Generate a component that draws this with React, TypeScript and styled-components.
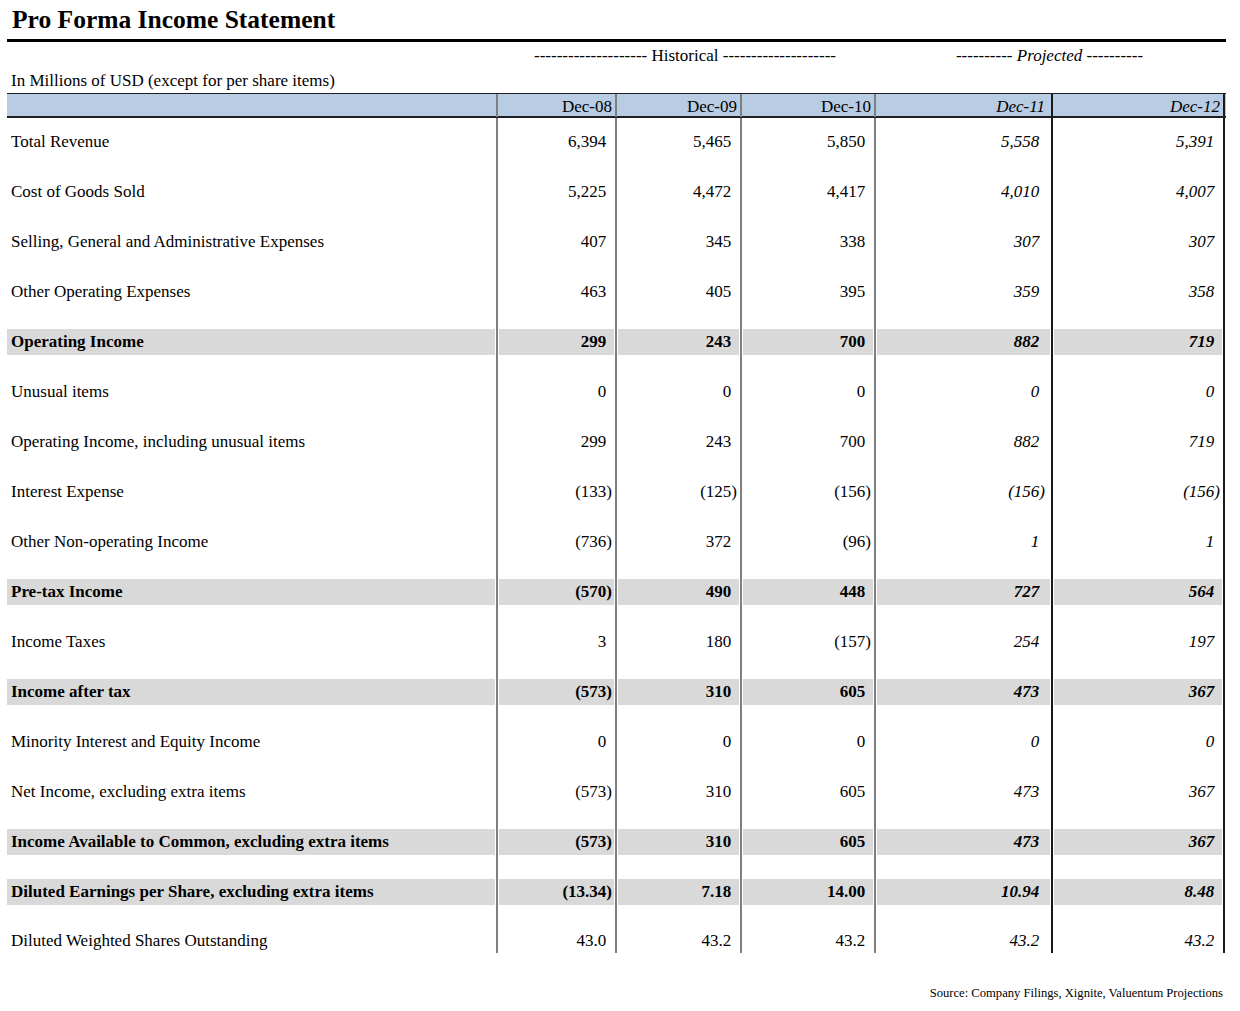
import React from "react";
import styled, { createGlobalStyle } from "styled-components";

const GlobalStyle = createGlobalStyle`
  html, body {
    margin: 0;
    padding: 0;
    background: #ffffff;
  }
  body {
    font-family: "Liberation Serif", "Times New Roman", serif;
    color: #000000;
  }
`;

const COLS = "489px 119px 125px 134px 177px 174px";

const Page = styled.div`
  width: 1240px;
  box-sizing: border-box;
  padding: 0 14px 0 7px;
`;

const Title = styled.h1`
  margin: 0;
  height: 39px;
  display: flex;
  align-items: center;
  padding-left: 5px;
  font-size: 25.5px;
  font-weight: bold;
  border-bottom: 3px solid #000;
`;

const GroupRow = styled.div`
  display: grid;
  grid-template-columns: ${COLS};
  height: 26px;
  padding-top: 1px;
  box-sizing: border-box;
  align-items: center;
  font-size: 17px;
`;

const GroupLabel = styled.div<{ $italic?: boolean; $span: string }>`
  grid-column: ${(p) => p.$span};
  text-align: center;
  font-style: ${(p) => (p.$italic ? "italic" : "normal")};
  white-space: pre;
`;

const Units = styled.div`
  height: 25px;
  display: flex;
  align-items: center;
  padding-left: 4px;
  font-size: 17px;
`;

const HeaderRow = styled.div`
  display: grid;
  grid-template-columns: ${COLS};
  height: 25px;
  box-sizing: border-box;
  background: #b8cce4;
  border-top: 1px solid #1f1f1f;
  border-bottom: 2px solid #1f1f1f;
  font-size: 17px;
`;

const lineColor = (i: number) => (i >= 4 ? "#1a1a1a" : "#7f7f7f");

const HeaderCell = styled.div<{ $idx: number; $italic?: boolean; $lastCol?: boolean; $inset?: boolean }>`
  box-sizing: border-box;
  display: flex;
  align-items: center;
  justify-content: flex-end;
  padding: 3px ${(p) => (p.$inset ? "6px" : "3px")} 0 0;
  border-left: 2px solid ${(p) => lineColor(p.$idx)};
  border-right: ${(p) => (p.$lastCol ? "2px solid #1a1a1a" : "none")};
  font-style: ${(p) => (p.$italic ? "italic" : "normal")};
`;

const HeaderLabel = styled.div``;

const BodyRow = styled.div`
  display: grid;
  grid-template-columns: ${COLS};
  font-size: 17px;
`;

const LabelCell = styled.div<{ $last?: boolean }>`
  padding: ${(p) => (p.$last ? "11px 1px 0 0" : "11px 1px 13px 0")};
`;

const ValueCell = styled.div<{ $idx: number; $last?: boolean; $lastCol?: boolean }>`
  box-sizing: border-box;
  padding: ${(p) => (p.$last ? "11px 1px 0 1px" : "11px 1px 13px 1px")};
  border-left: 2px solid ${(p) => lineColor(p.$idx)};
  border-right: ${(p) => (p.$lastCol ? "2px solid #1a1a1a" : "none")};
`;

const Band = styled.div<{
  $shade?: boolean;
  $bold?: boolean;
  $italic?: boolean;
  $right?: boolean;
  $short?: boolean;
  $inset?: boolean;
}>`
  height: ${(p) => (p.$short ? "24px" : "26px")};
  display: flex;
  align-items: center;
  justify-content: ${(p) => (p.$right ? "flex-end" : "flex-start")};
  padding: ${(p) => (p.$right ? (p.$inset ? "0 5px 0 0" : "0 2px 0 0") : "0 0 0 4px")};
  background: ${(p) => (p.$shade ? "#d9d9d9" : "transparent")};
  font-weight: ${(p) => (p.$bold ? "bold" : "normal")};
  font-style: ${(p) => (p.$italic ? "italic" : "normal")};
  white-space: nowrap;
`;

const Ghost = styled.span`
  visibility: hidden;
`;

const Source = styled.div`
  padding-top: 32px;
  text-align: right;
  padding-right: 3px;
  font-size: 12.6px;
  line-height: 16px;
`;

type Row = { label: string; v: string[]; bold?: boolean };

const rows: Row[] = [
  { label: "Total Revenue", v: ["6,394", "5,465", "5,850", "5,558", "5,391"] },
  { label: "Cost of Goods Sold", v: ["5,225", "4,472", "4,417", "4,010", "4,007"] },
  { label: "Selling, General and Administrative Expenses", v: ["407", "345", "338", "307", "307"] },
  { label: "Other Operating Expenses", v: ["463", "405", "395", "359", "358"] },
  { label: "Operating Income", v: ["299", "243", "700", "882", "719"], bold: true },
  { label: "Unusual items", v: ["0", "0", "0", "0", "0"] },
  { label: "Operating Income, including unusual items", v: ["299", "243", "700", "882", "719"] },
  { label: "Interest Expense", v: ["(133)", "(125)", "(156)", "(156)", "(156)"] },
  { label: "Other Non-operating Income", v: ["(736)", "372", "(96)", "1", "1"] },
  { label: "Pre-tax Income", v: ["(570)", "490", "448", "727", "564"], bold: true },
  { label: "Income Taxes", v: ["3", "180", "(157)", "254", "197"] },
  { label: "Income after tax", v: ["(573)", "310", "605", "473", "367"], bold: true },
  { label: "Minority Interest and Equity Income", v: ["0", "0", "0", "0", "0"] },
  { label: "Net Income, excluding extra items", v: ["(573)", "310", "605", "473", "367"] },
  {
    label: "Income Available to Common, excluding extra items",
    v: ["(573)", "310", "605", "473", "367"],
    bold: true,
  },
  {
    label: "Diluted Earnings per Share, excluding extra items",
    v: ["(13.34)", "7.18", "14.00", "10.94", "8.48"],
    bold: true,
  },
  { label: "Diluted Weighted Shares Outstanding", v: ["43.0", "43.2", "43.2", "43.2", "43.2"] },
];

const headers = ["Dec-08", "Dec-09", "Dec-10", "Dec-11", "Dec-12"];

const Num: React.FC<{ value: string }> = ({ value }) => (
  <>
    {value}
    {!value.endsWith(")") && <Ghost>)</Ghost>}
  </>
);

export default function App() {
  return (
    <>
      <GlobalStyle />
      <Page>
        <Title>Pro Forma Income Statement</Title>
        <GroupRow>
          <GroupLabel $span="2 / 5">-------------------- Historical --------------------</GroupLabel>
          <GroupLabel $span="5 / 7" $italic>
            ---------- Projected ----------
          </GroupLabel>
        </GroupRow>
        <Units>In Millions of USD (except for per share items)</Units>
        <HeaderRow>
          <HeaderLabel />
          {headers.map((h, i) => (
            <HeaderCell key={h} $idx={i} $italic={i >= 3} $inset={i === 3} $lastCol={i === 4}>
              {h}
            </HeaderCell>
          ))}
        </HeaderRow>
        {rows.map((r, ri) => {
          const last = ri === rows.length - 1;
          return (
            <BodyRow key={r.label}>
              <LabelCell $last={last}>
                <Band $shade={r.bold} $bold={r.bold} $short={last}>
                  {r.label}
                </Band>
              </LabelCell>
              {r.v.map((v, i) => (
                <ValueCell key={i} $idx={i} $last={last} $lastCol={i === 4}>
                  <Band
                    $shade={r.bold}
                    $bold={r.bold}
                    $italic={i >= 3}
                    $inset={i === 3}
                    $right
                    $short={last}
                  >
                    <Num value={v} />
                  </Band>
                </ValueCell>
              ))}
            </BodyRow>
          );
        })}
        <Source>Source: Company Filings, Xignite, Valuentum Projections</Source>
      </Page>
    </>
  );
}
